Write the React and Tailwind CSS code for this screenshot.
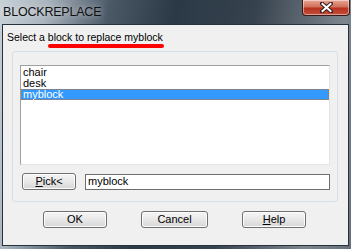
import React from "react";

const items = ["chair", "desk", "myblock"];

const Button = ({ children, className = "" }) => (
  <button
    className={`h-[17px] rounded-[3px] border border-[#707070] bg-[linear-gradient(#f6f6f6,#e8e8e8_50%,#d6d6d6)] text-[11px] leading-[13px] text-black shadow-[inset_0_0_0_1px_#fcfcfc] ${className}`}
  >
    {children}
  </button>
);

export default function App() {
  return (
    <div
      className="flex h-[249px] w-[351px] flex-col overflow-hidden bg-[linear-gradient(100deg,#c9d1d8_0%,#a9b4bd_12%,#4b5967_28%,#2b3946_45%,#36424e_65%,#7d858d_88%,#68717b_100%)]"
      style={{ fontFamily: '"Liberation Sans", Arial, sans-serif' }}
    >
      <div className="relative flex h-[24px] shrink-0 items-center pl-[3px]">
        <span className="text-[12.5px] tracking-[-0.2px] text-[#111] [text-shadow:0_0_6px_rgba(255,255,255,0.7)]">
          BLOCKREPLACE
        </span>
        <div className="absolute right-[1px] top-0 flex h-[16px] w-[48px] items-center justify-center rounded-b-[4px] border border-t-0 border-[#3a1a18] bg-[linear-gradient(#e8a593,#d0705c_45%,#b7321f_55%,#c4503a)] shadow-[inset_0_0_0_1px_rgba(255,255,255,0.45)]">
          <svg width="13" height="11" viewBox="0 0 13 11">
            <path d="M2 1.5 L11 9.5 M11 1.5 L2 9.5" stroke="#3b2020" strokeWidth="4" strokeLinecap="square" />
            <path d="M2.5 2 L10.5 9 M10.5 2 L2.5 9" stroke="#fff" strokeWidth="2" strokeLinecap="square" />
          </svg>
        </div>
      </div>
      <div className="mx-[2px] mb-[3px] flex-1 border border-[#26323e]">
        <div className="relative h-full bg-[#f0f0f0] pt-[6px]">
          <div className="relative ml-[4px] text-[10.5px] leading-[13px] text-black">
            Select a block to replace myblock
            <div className="absolute left-[41px] top-[13px] h-[4px] w-[116px] rounded-full bg-[#ff0000]" />
          </div>
          <div className="ml-[9px] mr-[10px] mt-[7px] h-[151px] rounded-[3px] border border-[#d5dfe5] px-[7px] pt-[13px]">
            <div className="h-[100px] border border-b-[#e3e3e3] border-l-[#a0a0a0] border-r-[#e3e3e3] border-t-[#a0a0a0] bg-white pt-px">
              {items.map((it) => (
                <div
                  key={it}
                  className={`h-[11px] pl-[2px] text-[11px] leading-[11px] ${
                    it === "myblock"
                      ? "outline-1 -outline-offset-1 outline-dotted outline-[#c07030] bg-[#3399ff] text-white"
                      : "text-black"
                  }`}
                >
                  {it}
                </div>
              ))}
            </div>
            <div className="mt-[8px] flex items-center gap-[9px] pl-[2px]">
              <Button className="w-[54px]">
                <span className="underline">P</span>ick&lt;
              </Button>
              <div className="flex h-[16px] flex-1 items-center border border-[#6e6e6e] bg-white pl-[2px] text-[11px]">
                myblock
              </div>
            </div>
          </div>
          <div className="mt-[9px] flex pl-[40px]">
            <Button className="w-[64px]">OK</Button>
            <Button className="ml-[34px] w-[67px]">Cancel</Button>
            <Button className="ml-[34px] w-[64px]">
              <span className="underline">H</span>elp
            </Button>
          </div>
        </div>
      </div>
    </div>
  );
}
